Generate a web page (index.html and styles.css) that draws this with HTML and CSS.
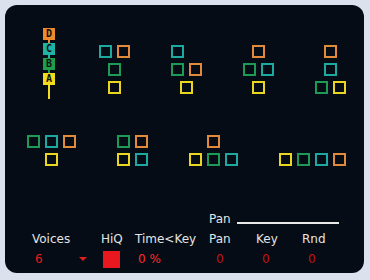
FILE: index.html
```html
<!DOCTYPE html>
<html lang="en">
<head>
    <meta charset="UTF-8">
    <title>Algorithm</title>
    <link rel="stylesheet" href="styles.css">
</head>
<body>
    <div class="panel">
        <div class="top">
            <div class="chain">
                <div class="op op-d">D</div>
                <div class="link link-d"></div>
                <div class="op op-c">C</div>
                <div class="link link-c"></div>
                <div class="op op-b">B</div>
                <div class="link link-b"></div>
                <div class="op op-a">A</div>
                <div class="tail"></div>
            </div>

            <div class="algos">
                <div class="algo w4">
                    <div class="box teal r1 c1"></div>
                    <div class="box orange r1 c3"></div>
                    <div class="box green r2 c2"></div>
                    <div class="box yellow r3 c2"></div>
                </div>
                <div class="algo w4">
                    <div class="box teal r1 c1"></div>
                    <div class="box green r2 c1"></div>
                    <div class="box orange r2 c3"></div>
                    <div class="box yellow r3 c2"></div>
                </div>
                <div class="algo w4">
                    <div class="box orange r1 c2"></div>
                    <div class="box green r2 c1"></div>
                    <div class="box teal r2 c3"></div>
                    <div class="box yellow r3 c2"></div>
                </div>
                <div class="algo w4">
                    <div class="box orange r1 c2"></div>
                    <div class="box teal r2 c2"></div>
                    <div class="box green r3 c1"></div>
                    <div class="box yellow r3 c3"></div>
                </div>
            </div>
        </div>

        <div class="algos lower">
            <div class="algo w6">
                <div class="box green r1 c1"></div>
                <div class="box teal r1 c3"></div>
                <div class="box orange r1 c5"></div>
                <div class="box yellow r2 c3"></div>
            </div>
            <div class="algo w4">
                <div class="box green r1 c1"></div>
                <div class="box orange r1 c3"></div>
                <div class="box yellow r2 c1"></div>
                <div class="box teal r2 c3"></div>
            </div>
            <div class="algo w6">
                <div class="box orange r1 c3"></div>
                <div class="box yellow r2 c1"></div>
                <div class="box green r2 c3"></div>
                <div class="box teal r2 c5"></div>
            </div>
            <div class="algo w8">
                <div class="box yellow r2 c1"></div>
                <div class="box green r2 c3"></div>
                <div class="box teal r2 c5"></div>
                <div class="box orange r2 c7"></div>
            </div>
        </div>

        <div class="controls">
            <div class="pan-title">
                <span>Pan</span>
                <div class="rule"></div>
            </div>
            <div class="row labels">
                <span>Voices</span>
                <span>HiQ</span>
                <span>Time&lt;Key</span>
                <span>Pan</span>
                <span>Key</span>
                <span>Rnd</span>
            </div>
            <div class="row values">
                <div class="voices">
                    <span class="val bright">6</span>
                    <span class="arrow"></span>
                </div>
                <div><span class="hiq"></span></div>
                <span class="val hot">0 %</span>
                <span class="val dim pan">0</span>
                <span class="val dim">0</span>
                <span class="val dim">0</span>
            </div>
        </div>
    </div>
</body>
</html>
```

FILE: styles.css
```css
body {
    margin: 0;
    background-color: #dce1ee;
    font-family: "DejaVu Sans", sans-serif;
}

.panel {
    margin: 5px;
    width: 359px;
    height: 268px;
    box-sizing: border-box;
    background-color: #050c15;
    border-radius: 12px;
    padding-top: 23px;
}

/* operator chain + first row of algorithms */
.top {
    display: flex;
    align-items: flex-start;
    padding-left: 38px;
}

.chain {
    display: flex;
    flex-direction: column;
    align-items: center;
    width: 12px;
}

.op {
    width: 12px;
    height: 12px;
    font-family: "DejaVu Sans Mono", monospace;
    font-size: 10px;
    font-weight: bold;
    line-height: 12px;
    text-align: center;
    color: #101010;
}

.op-d { background-color: #ee8a2c; }
.op-c { background-color: #1fb3a6; }
.op-b { background-color: #1e9e4c; }
.op-a { background-color: #f2dc1e; }

.link {
    width: 2px;
    height: 3px;
}

.link-d { background-color: #ee8a2c; }
.link-c { background-color: #1fb3a6; }
.link-b { background-color: #1e9e4c; }

.tail {
    width: 2px;
    height: 14px;
    background-color: #f2dc1e;
}

.algos {
    display: flex;
    gap: 36px;
}

.top .algos {
    margin-top: 17px;
    margin-left: 44px;
}

.algos.lower {
    margin-top: 36px;
    padding-left: 22px;
}

.algo {
    display: grid;
    grid-auto-rows: 18px;
    grid-template-rows: 18px;
}

.w4 { grid-template-columns: repeat(4, 9px); }
.w6 { grid-template-columns: repeat(6, 9px); }
.w8 { grid-template-columns: repeat(8, 9px); }

.box {
    width: 13px;
    height: 13px;
    box-sizing: border-box;
    border: 2px solid;
    grid-column-end: span 2;
}

.r1 { grid-row: 1; }
.r2 { grid-row: 2; }
.r3 { grid-row: 3; }
.c1 { grid-column-start: 1; }
.c2 { grid-column-start: 2; }
.c3 { grid-column-start: 3; }
.c5 { grid-column-start: 5; }
.c7 { grid-column-start: 7; }

.teal { border-color: #1ea9a0; }
.orange { border-color: #e08a3a; }
.green { border-color: #1d9a55; }
.yellow { border-color: #e9d71f; }

/* bottom controls */
.controls {
    margin-top: 41px;
    font-size: 12px;
    line-height: 14px;
    color: #e4e4e4;
}

.pan-title {
    display: flex;
    align-items: flex-end;
    padding-left: 204px;
}

.rule {
    width: 102px;
    height: 2px;
    margin: 0 0 2px 6px;
    background-color: #e8e8e8;
}

.row {
    display: grid;
    grid-template-columns: 69px 34px 74px 47px 46px 1fr;
    padding-left: 27px;
}

.labels {
    margin-top: 6px;
}

.values {
    margin-top: 4px;
    align-items: center;
    height: 18px;
}

.voices {
    display: flex;
    align-items: center;
}

.val {
    padding-left: 6px;
}

.voices .val {
    padding-left: 3px;
    width: 44px;
}

.bright { color: #e51c1c; }
.hot { color: #ff2b2b; padding-left: 3px; }
.dim { color: #c81212; }
.pan { padding-left: 7px; }

.arrow {
    width: 0;
    height: 0;
    border-left: 4px solid transparent;
    border-right: 4px solid transparent;
    border-top: 4px solid #e51c1c;
}

.hiq {
    display: block;
    width: 17px;
    height: 17px;
    margin-left: 2px;
    background-color: #e8181e;
}
```
